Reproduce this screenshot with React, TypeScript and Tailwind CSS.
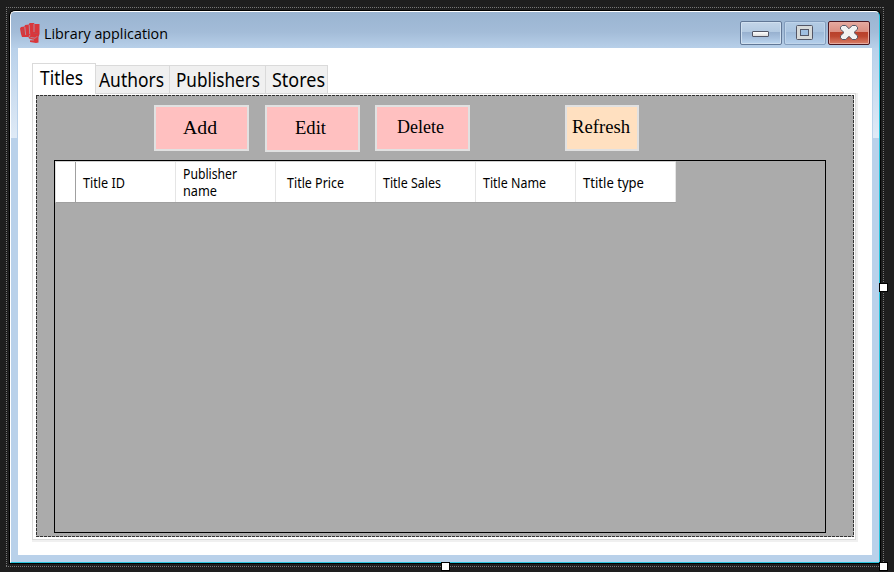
import React from "react";

const TAHOMA = "font-['Noto_Sans','DejaVu_Sans_Condensed',sans-serif]";

const tabs = [
  { label: "Authors", box: "w-[74px] pl-[3px]", width: 65 },
  { label: "Publishers", box: "w-[96px] pl-[6px]", width: 84 },
  { label: "Stores", box: "w-[62px] pl-[6px]", width: 53 },
];

const columns = [
  { lines: ["Title ID"], widths: [42], pad: "pl-[7px]" },
  { lines: ["Publisher", "name"], widths: [54, 34], pad: "pl-[7px]" },
  { lines: ["Title Price"], widths: [57], pad: "pl-[11px]" },
  { lines: ["Title Sales"], widths: [58], pad: "pl-[7px]" },
  { lines: ["Title Name"], widths: [63], pad: "pl-[7px]" },
  { lines: ["Ttitle type"], widths: [61], pad: "pl-[7px]" },
];

/* A label set to an exact width, as GDI hinted text is. */
function Label({ text, width, size, className = "" }: { text: string; width: number; size: number; className?: string }) {
  const h = Math.round(size * 1.25);
  return (
    <svg width={width} height={h} className={`block shrink-0 overflow-visible ${className}`}>
      <text x="0" y={size} fontSize={size} textLength={width} lengthAdjust="spacingAndGlyphs">
        {text}
      </text>
    </svg>
  );
}

function CaptionButton({ kind, children }: { kind: "min" | "max" | "close"; children: React.ReactNode }) {
  const look = {
    min: "pt-[9px] border-[#617796] bg-[linear-gradient(#c3d5e8_0%,#b4cae2_44%,#97b0cf_46%,#a9c2df_75%,#bdd7f0_100%)] shadow-[inset_0_0_0_1px_#d0e0f0]",
    max: "pt-[3px] border-[#839dbd] bg-[linear-gradient(#b3cbe3_0%,#abc5e1_44%,#9db9d8_46%,#b5d0ec_100%)] shadow-[inset_0_0_0_1px_#bfd4ea]",
    close: "pt-[3px] border-[#4b1721] bg-[linear-gradient(#e5a99f_0%,#dc8f82_44%,#b8402b_46%,#bd4630_65%,#d9806a_100%)] shadow-[inset_0_0_0_1px_#e6aaa0]",
  }[kind];
  return <div className={`h-6 w-[42px] rounded-[2px] border pl-[11px] ${look}`}>{children}</div>;
}

function Fist() {
  return (
    <svg width="20" height="20" viewBox="0 0 20 20" className="block shrink-0">
      <path fill="#d9363b" d="M0 5.5 1 4 4.5 3.5 5 2 9 1.5 9.5 0H14L14.5 1H19.5V11L18.5 14V19.5L16 20 10 19V17L13 16.5 9 15.5 8.5 14 2 14 1 11Z" />
      <path stroke="#a8a3b4" strokeWidth=".8" fill="none" d="m4.8 4 .9 8M9.2 2l.5 9M14 1v8M10 11.7l-1 2.6M10.5 14.5l4.7.7 2-2M10 17h4" />
      <path stroke="#a8575f" strokeWidth=".6" fill="none" d="m13.5 10.3 4 .2M2.2 6l.8 5" />
    </svg>
  );
}

function ActionButton({ label, width, className }: { label: string; width: number; className: string }) {
  return (
    <button className={`flex shrink-0 border-2 border-[#e1e1e1] font-['Liberation_Serif',serif] ${className}`}>
      <Label text={label} width={width} size={18} />
    </button>
  );
}

function Handle({ className }: { className: string }) {
  return <div className={`absolute size-[9px] border border-black bg-white ${className}`} />;
}

export default function App() {
  return (
    <div className="relative h-[572px] w-[894px] overflow-hidden bg-[#1e1e1e] pl-[9px] pt-[10px] text-black">
      <div className="absolute left-[6px] top-[7px] h-px w-[878px] bg-[repeating-linear-gradient(90deg,#777_0_1px,transparent_1px_2px)]" />
      <div className="absolute left-[6px] top-[566px] h-px w-[878px] bg-[repeating-linear-gradient(90deg,#777_0_1px,transparent_1px_2px)]" />
      <div className="absolute left-[6px] top-[7px] h-[560px] w-px bg-[repeating-linear-gradient(#777_0_1px,transparent_1px_2px)]" />
      <div className="absolute left-[883px] top-[7px] h-[560px] w-px bg-[repeating-linear-gradient(#777_0_1px,transparent_1px_2px)]" />

      <div className="h-[554px] w-[872px] rounded-t-[6px] bg-black p-px">
        <div className="relative h-[552px] w-[870px] rounded-t-[5px] border border-l-white border-t-white border-r-[#27c4dd] border-b-[#27c4dd] bg-[linear-gradient(#9ab4d1_0px,#a3bcd8_20px,#b9d1ea_37px,#b9d1ea_100%)]">
          <div className="absolute left-0 top-[36px] h-[90px] w-[6px] bg-[linear-gradient(#b9d1ea,#dfeaf6)]" />
          <div className="absolute right-0 top-[36px] h-[90px] w-[6px] bg-[linear-gradient(#b9d1ea,#dfeaf6)]" />
          <header className="flex h-[36px] pl-[9px]">
            <div className="pt-[11px]"><Fist /></div>
            <div className="ml-[4px] pt-[13px] font-['Open_Sans','Noto_Sans',sans-serif]">
              <Label text="Library application" width={124} size={14} />
            </div>
            <div className="ml-auto flex gap-[2px] pr-[9px] pt-[9px]">
              <CaptionButton kind="min">
                <div className="h-[6px] w-[17px] rounded-[1px] border border-[#535666] bg-[linear-gradient(#fff,#ddd)]" />
              </CaptionButton>
              <CaptionButton kind="max">
                <svg width="17" height="15" viewBox="0 0 17 15" className="block">
                  <rect x=".5" y=".5" width="16" height="14" rx="1" fill="#d6d9d9" stroke="#535666" />
                  <rect x="4.5" y="4.5" width="8" height="6" fill="#a0bfe0" stroke="#535666" />
                </svg>
              </CaptionButton>
              <CaptionButton kind="close">
                <svg width="18" height="15" viewBox="0 0 18 15" className="block">
                  <path d="M2.2.5h3.6L9 3.7 12.2.5h3.6l1.7 1.7v2L14 7.5l3.5 3.3v2l-1.7 1.7h-3.6L9 11.3l-3.2 3.2H2.2L.5 12.8v-2L4 7.5.5 4.2v-2Z" fill="#f2f2f2" stroke="#535666" />
                </svg>
              </CaptionButton>
            </div>
          </header>

          <main className="ml-[7px] h-[507px] w-[854px] bg-white pl-[14px] pt-[15px]">
            <nav className={`relative z-10 flex h-[31px] items-start ${TAHOMA}`}>
              <div className="h-[31px] w-[64px] border border-b-0 border-[#dadada] bg-white pl-[7px] pt-[2px]">
                <Label text="Titles" width={43} size={19} />
              </div>
              {tabs.map((t) => (
                <div key={t.label} className={`mt-[2px] h-[29px] border border-l-0 border-[#dadada] bg-[#f0f0f0] pt-[2px] ${t.box}`}>
                  <Label text={t.label} width={t.width} size={19} />
                </div>
              ))}
            </nav>
            <section className="-mt-px h-[447px] w-[824px] border border-[#dadada] bg-white pl-[3px] pt-px shadow-[1px_1px_0_1px_#f0f0f0]">
              <div className="h-[442px] w-[818px] bg-[repeating-linear-gradient(90deg,#333_0_3px,#bbb_3px_4px)] py-px">
                <div className="h-[440px] w-[818px] bg-[repeating-linear-gradient(#333_0_3px,#bbb_3px_4px)] px-px">
                  <div className="h-[440px] w-[816px] bg-[#ababab] pl-[17px] pt-[9px]">
                    <div className="flex h-[55px] items-start pl-[100px]">
                      <ActionButton label="Add" width={34} className="h-[46px] w-[95px] bg-[#ffc0c0] pl-[27px] pt-[9px]" />
                      <ActionButton label="Edit" width={31} className="ml-[16px] h-[47px] w-[95px] bg-[#ffc0c0] pl-[28px] pt-[9px]" />
                      <ActionButton label="Delete" width={47} className="ml-[15px] h-[46px] w-[95px] bg-[#ffc0c0] pl-[20px] pt-[8px]" />
                      <ActionButton label="Refresh" width={58} className="ml-[95px] h-[46px] w-[74px] bg-[#ffe0c0] pl-[5px] pt-[8px]" />
                    </div>
                    <div className="h-[373px] w-[772px] border border-black">
                      <div className={`flex h-[42px] w-[621px] border-b border-l border-t border-b-[#a0a0a0] border-l-[#e0e0e0] border-t-[#d0d0d0] bg-white ${TAHOMA}`}>
                        <div className="w-[20px] border-r border-[#a0a0a0]" />
                        {columns.map((c) => (
                          <div key={c.lines[0]} className={`flex w-[100px] flex-col justify-center border-r border-[#e5e5e5] ${c.pad}`}>
                            {c.lines.map((line, i) => (
                              <Label key={line} text={line} width={c.widths[i]} size={13.5} />
                            ))}
                          </div>
                        ))}
                      </div>
                    </div>
                  </div>
                </div>
              </div>
            </section>
          </main>
        </div>
      </div>

      <Handle className="left-[879px] top-[283px]" />
      <Handle className="left-[441px] top-[562px]" />
      <Handle className="left-[879px] top-[562px]" />
    </div>
  );
}
